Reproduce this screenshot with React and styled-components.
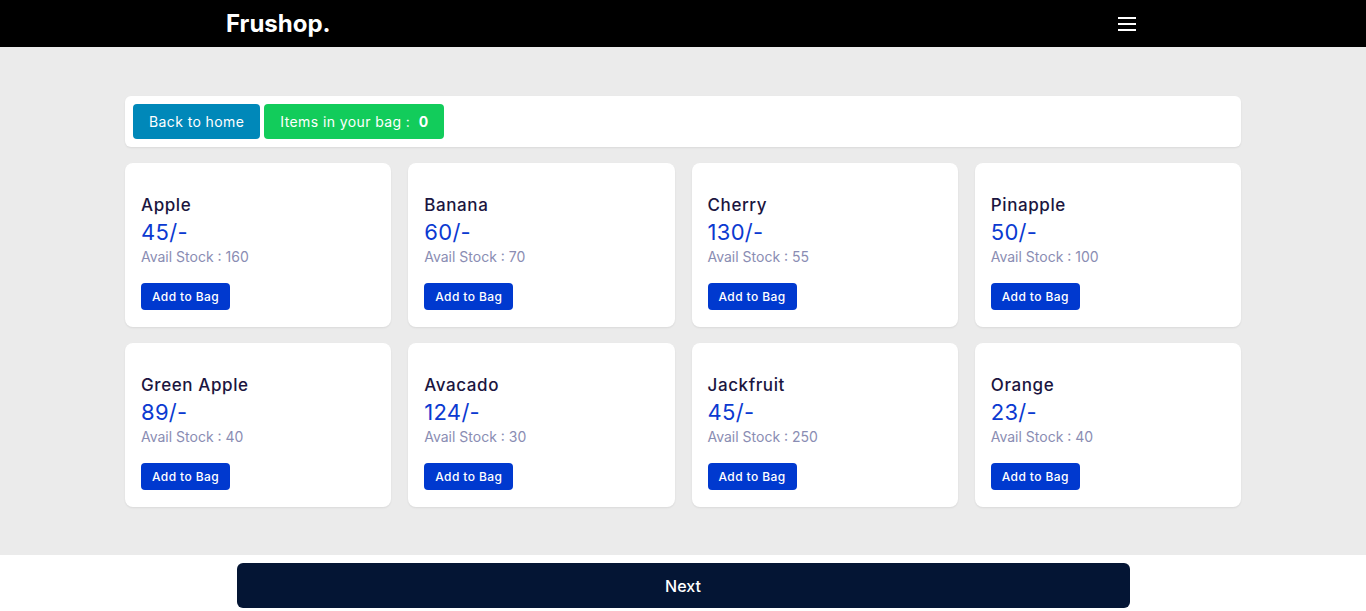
import React, { useState } from 'react';
import styled, { createGlobalStyle } from 'styled-components';

const fruits = [
    { name: 'Apple', price: 45, stock: 160 },
    { name: 'Banana', price: 60, stock: 70 },
    { name: 'Cherry', price: 130, stock: 55 },
    { name: 'Pinapple', price: 50, stock: 100 },
    { name: 'Green Apple', price: 89, stock: 40 },
    { name: 'Avacado', price: 124, stock: 30 },
    { name: 'Jackfruit', price: 45, stock: 250 },
    { name: 'Orange', price: 23, stock: 40 },
];

function App() {
    const [bag, setBag] = useState(0);

    return (
        <>
            <GlobalStyle />
            <Navbar>
                <NavInner>
                    <Logo>Frushop.</Logo>
                    <MenuButton aria-label="menu">
                        <span />
                        <span />
                        <span />
                    </MenuButton>
                </NavInner>
            </Navbar>
            <Main>
                <Container>
                    <TopBar>
                        <ActionButton color="#0088b9">Back to home</ActionButton>
                        <ActionButton color="#12cc5b">
                            Items in your bag : <b>{bag}</b>
                        </ActionButton>
                    </TopBar>
                    <Grid>
                        {fruits.map((fruit) => (
                            <Card key={fruit.name}>
                                <Title>{fruit.name}</Title>
                                <Price>{fruit.price}/-</Price>
                                <Stock>Avail Stock : {fruit.stock}</Stock>
                                <AddButton onClick={() => setBag(bag + 1)}>Add to Bag</AddButton>
                            </Card>
                        ))}
                    </Grid>
                </Container>
            </Main>
            <Footer>
                <NextButton>Next</NextButton>
            </Footer>
        </>
    );
}

const GlobalStyle = createGlobalStyle`
    * {
        box-sizing: border-box;
    }
    body {
        margin: 0;
        background: #ebebeb;
        font-family: Inter, "Open Sans", sans-serif;
    }
`;

const Navbar = styled.nav`
    background: #000;
    height: 47px;
`;

const NavInner = styled.div`
    width: 914px;
    height: 100%;
    margin: 0 auto;
    display: flex;
    align-items: center;
    justify-content: space-between;
`;

const Logo = styled.div`
    color: #fff;
    font-size: 24px;
    font-weight: 700;
`;

const MenuButton = styled.button`
    background: none;
    border: none;
    padding: 0;
    margin-right: 4px;
    width: 18px;
    display: flex;
    flex-direction: column;
    gap: 4px;
    span {
        display: block;
        height: 2px;
        background: #fff;
    }
`;

const Main = styled.main`
    padding: 49px 0 48px;
`;

const Container = styled.div`
    width: 1116px;
    margin: 0 auto;
    display: flex;
    flex-direction: column;
    gap: 16px;
`;

const TopBar = styled.div`
    background: #fff;
    border-radius: 6px;
    padding: 8px;
    display: flex;
    gap: 4px;
    box-shadow: 0 1px 2px rgba(0, 0, 0, 0.08);
`;

const ActionButton = styled.button`
    background: ${(props) => props.color};
    color: #fff;
    border: none;
    border-radius: 4px;
    height: 35px;
    padding: 0 16px;
    font-family: inherit;
    font-size: 14px;
    letter-spacing: 0.4px;
    b {
        margin-left: 4px;
        font-weight: 700;
    }
`;

const Grid = styled.div`
    display: grid;
    grid-template-columns: repeat(4, 1fr);
    column-gap: 17px;
    row-gap: 16px;
`;

const Card = styled.div`
    background: #fff;
    border-radius: 8px;
    padding: 30px 16px 17px;
    display: flex;
    flex-direction: column;
    align-items: flex-start;
    box-shadow: 0 1px 2px rgba(0, 0, 0, 0.08);
`;

const Title = styled.h3`
    margin: 0;
    font-size: 17px;
    line-height: 24px;
    font-weight: 500;
    letter-spacing: 0.6px;
    color: #1b1540;
`;

const Price = styled.div`
    font-size: 22px;
    line-height: 30px;
    letter-spacing: 0.3px;
    color: #0b3ad1;
`;

const Stock = styled.div`
    font-size: 14px;
    line-height: 20px;
    color: #8a8db3;
    margin-bottom: 16px;
`;

const AddButton = styled.button`
    background: #0039cf;
    color: #fff;
    border: none;
    border-radius: 4px;
    height: 27px;
    padding: 0 11px;
    font-family: inherit;
    font-size: 12px;
    font-weight: 500;
    letter-spacing: 0.4px;
`;

const Footer = styled.footer`
    background: #fff;
    padding: 8px 0 12px;
    display: flex;
    justify-content: center;
`;

const NextButton = styled.button`
    width: 893px;
    height: 45px;
    background: #041534;
    color: #fff;
    border: none;
    border-radius: 6px;
    font-family: inherit;
    font-size: 16px;
    font-weight: 500;
`;

export default App;
